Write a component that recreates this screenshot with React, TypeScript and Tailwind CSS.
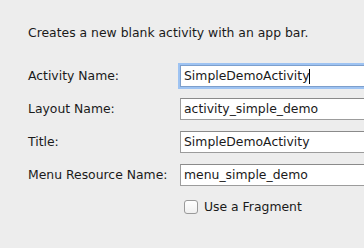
const fields = [
  { label: "Activity Name:", value: "SimpleDemoActivity", focused: true },
  { label: "Layout Name:", value: "activity_simple_demo" },
  { label: "Title:", value: "SimpleDemoActivity" },
  { label: "Menu Resource Name:", value: "menu_simple_demo" },
];

export default function App() {
  return (
    <div className="w-[364px] h-[248px] overflow-hidden bg-[#ededed] text-[12.4px] text-[#1a1a1a] pl-[28px] pt-[25px]" style={{ fontFamily: '"DejaVu Sans", sans-serif' }}>
      <p className="leading-[16px] h-[16px] whitespace-nowrap">Creates a new blank activity with an app bar.</p>

      <div className="mt-[24px] flex flex-col gap-[11px] w-[400px]">
        {fields.map((f) => (
          <div key={f.label} className="flex items-center h-[22px]">
            <span className="w-[152px] shrink-0 whitespace-nowrap">{f.label}</span>
            <div
              className={
                f.focused
                  ? "h-[22px] w-[240px] shrink-0 bg-white border border-[#7d9fcc] shadow-[0_0_0_2px_#9ec3f2] flex items-center pl-[3px]"
                  : "h-[22px] w-[240px] shrink-0 bg-white border border-[#9c9c9c] border-t-[#8a8a8a] flex items-center pl-[3px]"
              }
            >
              <span className="whitespace-nowrap">{f.value}</span>
              {f.focused && <span className="w-px h-[15px] bg-black" />}
            </div>
          </div>
        ))}
      </div>

      <div className="mt-[12px] ml-[156px] flex items-center gap-[6px]">
        <span className="w-[14px] h-[14px] rounded-[3px] border border-[#9a9a9a] bg-gradient-to-b from-white to-[#f0f0f0]" />
        <span>Use a Fragment</span>
      </div>
    </div>
  );
}
